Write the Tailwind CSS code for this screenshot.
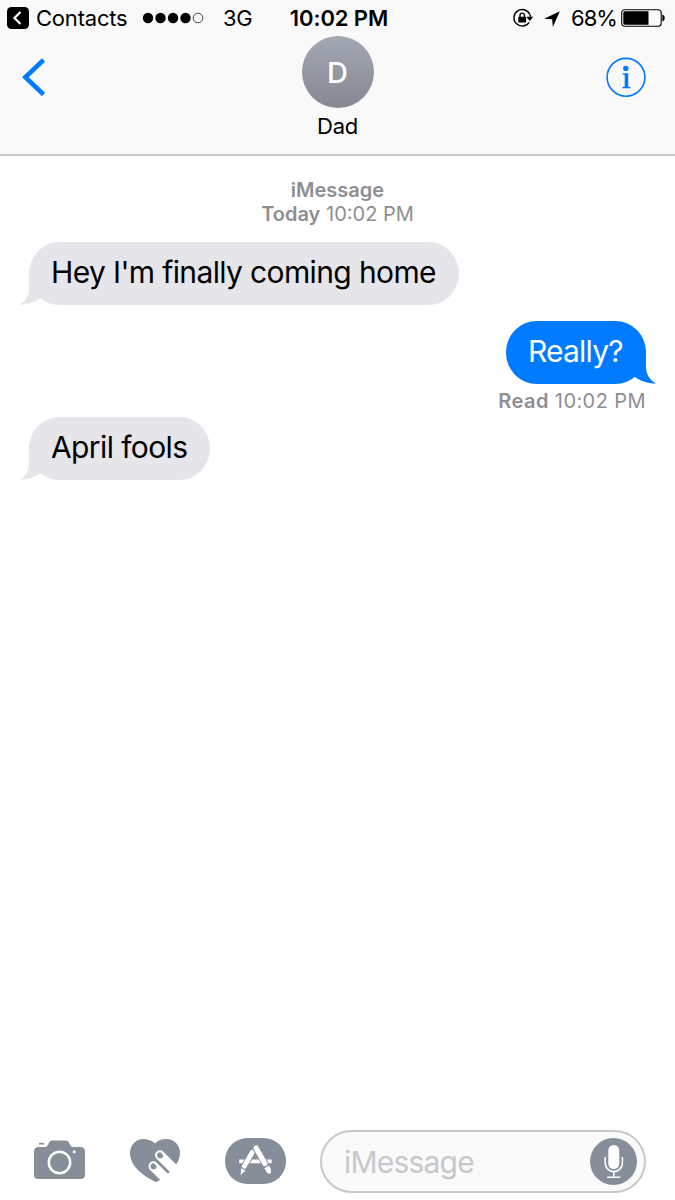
<!DOCTYPE html>
<html lang="en">
<head>
  <meta charset="UTF-8">
  <meta name="viewport" content="width=device-width, initial-scale=1.0">
  <title>Messages - Dad</title>
  <script src="https://cdn.jsdelivr.net/npm/@tailwindcss/browser@4"></script>
</head>
<body class="bg-white font-['Inter',sans-serif] text-black">
  <div class="w-[675px] h-[1200px] flex flex-col overflow-hidden">

    <header class="h-[156px] shrink-0 bg-[#f9f9f9] border-b-2 border-[#c8c8ca]">
      <!-- Status bar -->
      <div class="h-9 grid grid-cols-[283px_112px_1fr] items-center text-[22px] leading-9 whitespace-nowrap">
        <div class="flex items-center pl-[7px]">
          <svg class="w-[22px] h-[22px]" viewBox="0 0 22 22" fill="none">
            <rect width="22" height="22" rx="4.5" fill="#000"/>
            <path d="M13.5 5 7.5 11l6 6" stroke="#fff" stroke-width="2.2"/>
          </svg>
          <span class="ml-[7px] w-[91px] tracking-[-0.2px]">Contacts</span>
          <svg class="ml-[15px] w-[62px] h-3" viewBox="0 0 62 12">
            <circle cx="6" cy="6" r="5.2"/>
            <circle cx="18.5" cy="6" r="5.2"/>
            <circle cx="31" cy="6" r="5.2"/>
            <circle cx="43.5" cy="6" r="5.2"/>
            <circle cx="56" cy="6" r="4.8" fill="none" stroke="#333" stroke-width="0.9"/>
          </svg>
          <span class="ml-[19px] tracking-[-0.4px]">3G</span>
        </div>
        <div class="text-center font-semibold tracking-[-0.1px]">10:02 PM</div>
        <div class="flex items-center justify-end pr-[10px]">
          <svg class="w-[22px] h-5" viewBox="0 0 22 20" fill="none">
            <path d="M17.200 14.300A8.300 8.300 0 1 1 17.700 6.200" stroke="#000" stroke-width="1.400"/>
            <path d="M14.300 8.800h7l-3.500 4.200z" fill="#000"/>
            <path d="M17.700 6.200q.7 1.400.8 3" stroke="#000" stroke-width="1.400"/>
            <rect x="6.300" y="8.800" width="7.800" height="5.700" rx=".7" fill="#000"/>
            <path d="M8 9V7.300a2.200 2.200 0 0 1 4.400 0V9" stroke="#000" stroke-width="1.400"/>
          </svg>
          <svg class="mt-px ml-[10px] w-4 h-4" viewBox="0 0 16 16">
            <path d="M15.800.2 8.800 16 8.200 8.300.2 7.700z"/>
          </svg>
          <span class="ml-[11px] w-[47px] tracking-[-1px]">68%</span>
          <svg class="ml-[3px] w-11 h-[18px]" viewBox="0 0 44 18">
            <rect x=".7" y=".7" width="39.500" height="16.500" rx="3" fill="none" stroke="#000" stroke-width="1.100"/>
            <path d="M4 2.200h23.500v13.500H4A1.700 1.700 0 0 1 2.300 14V4A1.700 1.700 0 0 1 4 2.200z"/>
            <path d="M41.300 5.500c3.200.6 3.200 6.200 0 6.800z"/>
          </svg>
        </div>
      </div>

      <!-- Contact -->
      <div class="grid grid-cols-[1fr_120px_1fr] items-start">
        <a href="#" class="pl-[22px] pt-[22px]">
          <svg class="w-6 h-[38px]" viewBox="0 0 24 38" fill="none">
            <path d="M21.500 2 3.400 19.200l18.100 17.300" stroke="#007aff" stroke-width="4.600"/>
          </svg>
        </a>
        <div class="flex flex-col items-center">
          <div class="w-[72px] h-[72px] rounded-full bg-linear-to-b from-[#a3a8b5] to-[#858892] flex items-center justify-center text-white text-[29px] font-medium leading-none">D</div>
          <div class="mt-[4px] text-[22px] leading-7 tracking-[-0.3px]">Dad</div>
        </div>
        <a href="#" class="flex justify-end pr-[29px] pt-[21px]">
          <svg class="w-10 h-10" viewBox="0 0 40 40" fill="none">
            <circle cx="20" cy="20.300" r="18.900" stroke="#007aff" stroke-width="1.600"/>
            <circle cx="19.800" cy="11.400" r="2.700" fill="#007aff"/>
            <path d="M16.500 16.200h5.700v13.500l2.300.4v1.100h-8V30l2.200-.4V17.800l-2.200-.4z" fill="#007aff"/>
          </svg>
        </a>
      </div>
    </header>

    <!-- Conversation -->
    <main class="flex-1 flex flex-col pl-[29px] pr-[29px] pt-[22px]">
      <div class="text-center text-[20px] leading-6 text-[#8e8e93]">
        <p class="font-semibold">iMessage</p>
        <p><span class="font-semibold">Today</span> 10:02 PM</p>
      </div>

      <div class="relative mt-[16px] w-[430px] h-[63px] rounded-[31px] bg-[#e5e5ea] pl-[22px] text-[30px] leading-[61px] tracking-[-0.63px] whitespace-nowrap">
        Hey I'm finally coming home
        <svg class="absolute -left-[9px] bottom-0 w-[32px] h-[34px]" viewBox="0 0 32 34" fill="#e5e5ea">
          <path d="M9 0v17C9 24 6 30 0 33.500 8 33.500 15 31 20.500 27L32 20V0z"/>
        </svg>
      </div>

      <div class="relative mt-[16px] self-end w-[140px] h-[63px] rounded-[31px] bg-[#007aff] pl-[22px] text-[30px] leading-[61px] tracking-[-0.8px] text-white whitespace-nowrap">
        <svg class="absolute -right-[10px] bottom-0 w-[32px] h-[34px]" viewBox="0 0 32 34" fill="#007aff">
          <path d="M22 0v17c0 7 3.500 13 10 16.500-8.500 0-15.500-2.500-21-6.500L0 20V0z"/>
        </svg>
        <span class="relative">Really?</span>
      </div>
      <p class="mt-[5px] text-right text-[20px] leading-6 tracking-[0.42px] text-[#8e8e93]"><span class="font-semibold">Read</span> 10:02 PM</p>

      <div class="relative mt-[4px] w-[181px] h-[63px] rounded-[31px] bg-[#e5e5ea] pl-[22px] text-[30px] leading-[61px] tracking-[-0.6px] whitespace-nowrap">
        April fools
        <svg class="absolute -left-[9px] bottom-0 w-[32px] h-[34px]" viewBox="0 0 32 34" fill="#e5e5ea">
          <path d="M9 0v17C9 24 6 30 0 33.500 8 33.500 15 31 20.500 27L32 20V0z"/>
        </svg>
      </div>
    </main>

    <!-- Message input -->
    <footer class="h-[71px] shrink-0 flex items-start pl-[34px] pr-[29px] pt-[1px]">
      <svg class="mt-[10px] w-[51px] h-[40px]" viewBox="0 0 51 40" fill="none">
        <path d="M4.500 7H11q2 0 3-2.200L15 2.500Q16 .5 18 .5h14q2 0 3 2l1 2.300Q37 7 39 7h7.500Q51 7 51 11.500V34.500Q51 39 46.500 39h-42Q0 39 0 34.500v-23Q0 7 4.500 7z" fill="#868e99"/>
        <path d="M5 3.700h5" stroke="#868e99" stroke-width="1.700"/>
        <circle cx="25.500" cy="22.500" r="10.700" stroke="#fff" stroke-width="2.500"/>
        <circle cx="40.200" cy="11.800" r="1.500" fill="#fff"/>
      </svg>
      <svg class="ml-[45px] mt-[9px] w-[50px] h-[44px]" viewBox="0 0 50 44" fill="none">
        <path d="M25 4.500C29 .5 33 0 36.500 0 44 0 50 6 50 13.500 50 28 34 38.500 27.500 42.500q-1.500.8-3 0C13 36.500 0 27 0 14 0 6 6 0 13.500 0 18 0 22 1.500 25 4.500z" fill="#868e99"/>
        <path d="M30 16.200 48 34.200M23.400 27.200 38 41.800" stroke="#fff" stroke-width="9.800" stroke-linecap="round"/>
        <path d="M38.300 34 52 28v18H34l-4-5z" fill="#fff"/>
        <path d="m26.500 21.500 12 12" stroke="#868e99" stroke-width="2.400"/>
        <path d="M27.200 15.300q.8-2 3-2.200l3 3.200q.2 2.300-1.800 2.900-2.400.3-3.700-.8-.8-1.300-.5-3.100zM20.600 26.300q.8-2 3-2.200l3 3.200q.2 2.300-1.800 2.900-2.400.3-3.700-.8-.8-1.300-.5-3.100z" fill="#868e99"/>
      </svg>
      <svg class="ml-[45px] mt-[8px] w-[61px] h-[46px]" viewBox="0 0 61 46" fill="none">
        <rect width="61" height="46" rx="22.500" fill="#868e99"/>
        <path d="M14.200 23.300h32.500" stroke="#fff" stroke-width="3.800"/>
        <path d="M27.300 14.300 18.300 30" stroke="#868e99" stroke-width="6.600"/>
        <path d="M27.300 14.300 19.300 28.200" stroke="#fff" stroke-width="4.800" stroke-linecap="round"/>
        <path d="m16.300 30.300 4.200 2.400-5 4.300z" fill="#fff"/>
        <path d="M31 10 42 29" stroke="#868e99" stroke-width="7"/>
        <path d="M31 10 40 25.600" stroke="#fff" stroke-width="5.200" stroke-linecap="round"/>
        <path d="m39.400 30.300 4.800-2.800 1.700 3.500v4.500h-3.200z" fill="#fff"/>
      </svg>
      <div class="ml-[34px] flex-1 h-[63px] rounded-full border-2 border-[#c8c8cd] bg-[#fafafa] flex items-center justify-between pl-[22px] pr-[7px]">
        <span class="text-[30px] leading-none text-[#c7c7cc] tracking-[-0.8px]">iMessage</span>
        <svg class="-mt-px w-[47px] h-[47px]" viewBox="0 0 47 47" fill="none">
          <circle cx="23.500" cy="23.500" r="23.500" fill="#868e99"/>
          <rect x="18.300" y="7" width="11" height="24" rx="5.500" fill="#fff"/>
          <path d="M15.200 19v6a8.600 8.600 0 0 0 17.200 0v-6M23.800 33.500v5.500M17.200 39.200h13" stroke="#fff" stroke-width="1.600"/>
        </svg>
      </div>
    </footer>
  </div>
</body>
</html>
